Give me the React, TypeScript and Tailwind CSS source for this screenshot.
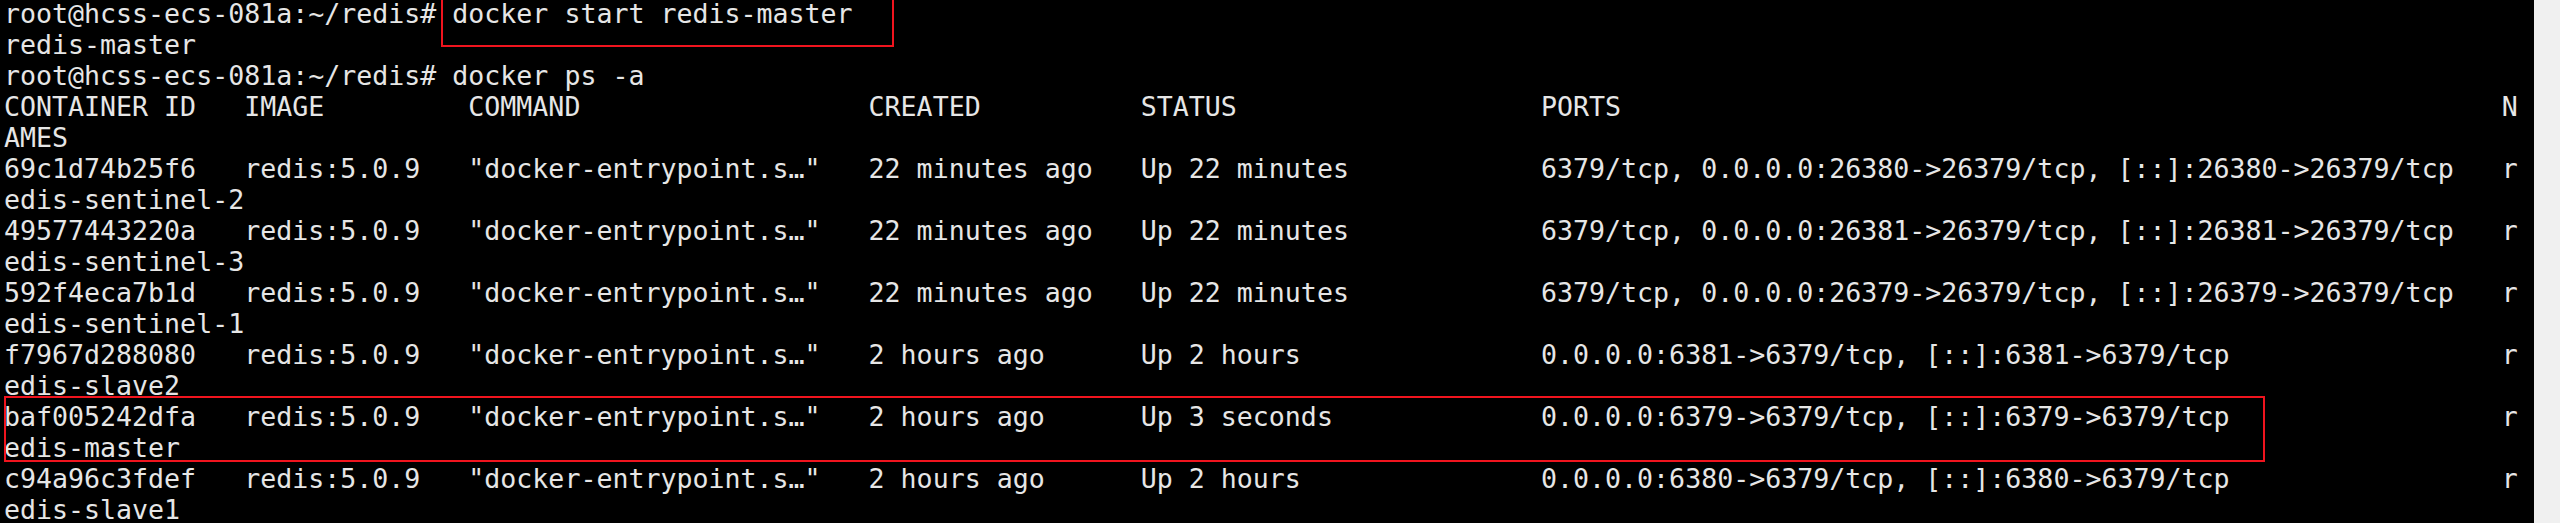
import React from 'react';

type Container = {
    id: string;
    image: string;
    command: string;
    created: string;
    status: string;
    ports: string;
    name: string;
};

const containers: Container[] = [
    {
        id: '69c1d74b25f6',
        image: 'redis:5.0.9',
        command: '"docker-entrypoint.s…"',
        created: '22 minutes ago',
        status: 'Up 22 minutes',
        ports: '6379/tcp, 0.0.0.0:26380->26379/tcp, [::]:26380->26379/tcp',
        name: 'redis-sentinel-2'
    },
    {
        id: '49577443220a',
        image: 'redis:5.0.9',
        command: '"docker-entrypoint.s…"',
        created: '22 minutes ago',
        status: 'Up 22 minutes',
        ports: '6379/tcp, 0.0.0.0:26381->26379/tcp, [::]:26381->26379/tcp',
        name: 'redis-sentinel-3'
    },
    {
        id: '592f4eca7b1d',
        image: 'redis:5.0.9',
        command: '"docker-entrypoint.s…"',
        created: '22 minutes ago',
        status: 'Up 22 minutes',
        ports: '6379/tcp, 0.0.0.0:26379->26379/tcp, [::]:26379->26379/tcp',
        name: 'redis-sentinel-1'
    },
    {
        id: 'f7967d288080',
        image: 'redis:5.0.9',
        command: '"docker-entrypoint.s…"',
        created: '2 hours ago',
        status: 'Up 2 hours',
        ports: '0.0.0.0:6381->6379/tcp, [::]:6381->6379/tcp',
        name: 'redis-slave2'
    },
    {
        id: 'baf005242dfa',
        image: 'redis:5.0.9',
        command: '"docker-entrypoint.s…"',
        created: '2 hours ago',
        status: 'Up 3 seconds',
        ports: '0.0.0.0:6379->6379/tcp, [::]:6379->6379/tcp',
        name: 'redis-master'
    },
    {
        id: 'c94a96c3fdef',
        image: 'redis:5.0.9',
        command: '"docker-entrypoint.s…"',
        created: '2 hours ago',
        status: 'Up 2 hours',
        ports: '0.0.0.0:6380->6379/tcp, [::]:6380->6379/tcp',
        name: 'redis-slave1'
    }
];

// column widths as docker ps printed them
const widths = [15, 14, 25, 17, 25, 60];
const COLS = 157;

// pad the columns, then wrap at the terminal width
const row = (cells: string[], last: string) => {
    const line = cells.map((c, i) => c.padEnd(widths[i])).join('') + last;
    return [line.slice(0, COLS), line.slice(COLS)];
};

const prompt = 'root@hcss-ecs-081a:~/redis# ';

const lines: string[] = [
    prompt + 'docker start redis-master',
    'redis-master',
    prompt + 'docker ps -a',
    ...row(['CONTAINER ID', 'IMAGE', 'COMMAND', 'CREATED', 'STATUS', 'PORTS'], 'NAMES'),
    ...containers.flatMap((c) =>
        row([c.id, c.image, c.command, c.created, c.status, c.ports], c.name)
    )
];

const App = () => {
    return (
        <div className="flex h-[523px] w-[2560px] overflow-hidden">
            <div className="relative flex-1 bg-black overflow-hidden">
                <pre className="-mt-[2px] pl-[4px] text-[26.6px] leading-[31px] text-[#e6e6e6] font-['DejaVu_Sans_Mono',monospace] whitespace-pre">
                    {lines.map((l, i) => (
                        <div key={i} className="h-[31px]">{l}</div>
                    ))}
                </pre>

                {/* highlight boxes drawn over the output */}
                <div className="absolute left-[441px] top-[-3px] w-[453px] h-[50px] border-2 border-[#f0141e]" />
                <div className="absolute left-[4px] top-[396px] w-[2261px] h-[66px] border-2 border-[#f0141e]" />
            </div>
            <div className="w-[26px] bg-[#f0f0f0]" />
        </div>
    );
};

export default App;
